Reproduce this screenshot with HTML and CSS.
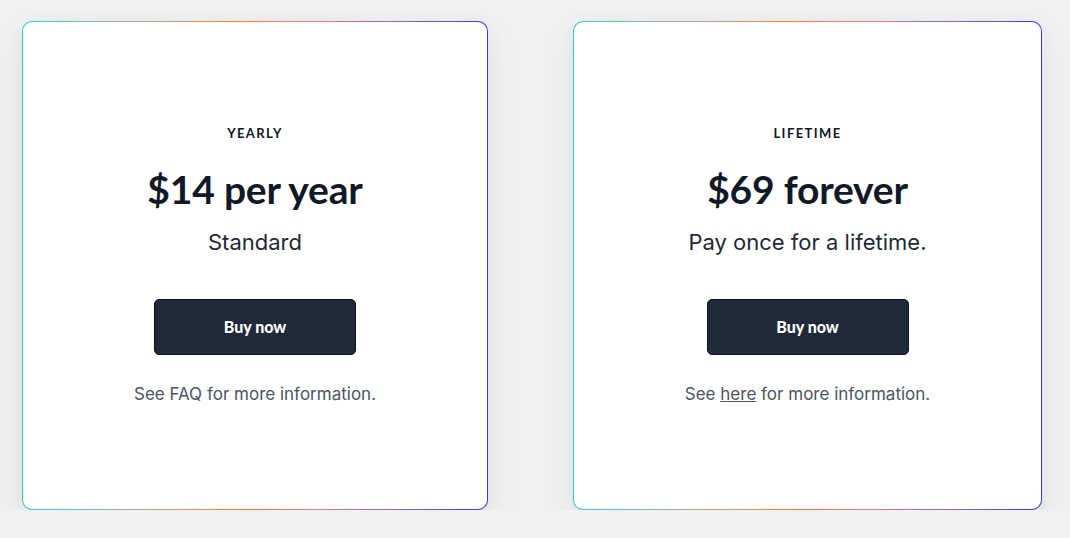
FILE: index.html
```html
<!DOCTYPE html>
<html lang="en">
<head>
    <meta charset="UTF-8">
    <meta name="viewport" content="width=device-width, initial-scale=1.0">
    <title>Pricing</title>
    <link rel="stylesheet" href="styles.css">
</head>
<body>
    <div class="plans">
        <!-- Yearly plan -->
        <div class="plan-card plan-yearly">
            <div class="plan-label">YEARLY</div>
            <h2 class="plan-price">$14 per year</h2>
            <p class="plan-desc">Standard</p>
            <button class="buy-btn">Buy now</button>
            <p class="plan-note">See FAQ for more information.</p>
        </div>

        <!-- Lifetime plan -->
        <div class="plan-card plan-lifetime">
            <div class="plan-label">LIFETIME</div>
            <h2 class="plan-price">$69 forever</h2>
            <p class="plan-desc">Pay once for a lifetime.</p>
            <button class="buy-btn">Buy now</button>
            <p class="plan-note">See <a href="#">here</a> for more information.</p>
        </div>
    </div>
</body>
</html>
```

FILE: styles.css
```css
/* ===== Page ===== */
body {
    margin: 0;
    padding: 0;
    background: #f0f1f3;
    font-family: 'Inter', sans-serif;
    color: #111827;
}

.plans {
    display: flex;
    gap: 85px;
    padding: 21px 0 0 22px;
}

/* ===== Card with gradient border ===== */
.plan-card {
    box-sizing: border-box;
    height: 489px;
    display: flex;
    flex-direction: column;
    align-items: center;
    padding-top: 103px;
    border: 1px solid transparent;
    border-radius: 10px;
    background:
        linear-gradient(#fff, #fff) padding-box,
        linear-gradient(90deg, #2cc6d8 0%, #9fb0a8 20%, #e8843a 45%, #d9808f 65%, #8a62b8 82%, #2f3fc9 100%) border-box;
    box-shadow: 0 16px 36px rgba(0, 0, 0, 0.07), 0 0 18px rgba(0, 0, 0, 0.03);
}

.plan-yearly {
    width: 466px;
}

.plan-lifetime {
    width: 469px;
}

/* ===== Text ===== */
.plan-label {
    font-family: 'Lato', sans-serif;
    font-size: 13px;
    font-weight: 700;
    letter-spacing: 1.4px;
    color: #111827;
}

.plan-price {
    font-family: 'Lato', sans-serif;
    font-size: 39px;
    font-weight: 700;
    letter-spacing: -0.2px;
    color: #111827;
    margin: 25px 0 0;
    line-height: 1.2;
}

.plan-desc {
    font-size: 22px;
    color: #1f2937;
    margin: 16px 0 0;
}

/* ===== Button ===== */
.buy-btn {
    margin-top: 44px;
    width: 202px;
    height: 56px;
    background: #1f2937;
    border: 1px solid #0b1220;
    border-radius: 5px;
    color: #fff;
    font-family: 'Lato', sans-serif;
    font-size: 16px;
    font-weight: 900;
    cursor: pointer;
}

.plan-note {
    font-size: 17px;
    color: #4b5563;
    margin: 29px 0 0;
}

.plan-note a {
    color: #4b5563;
    text-decoration: underline;
}
```
